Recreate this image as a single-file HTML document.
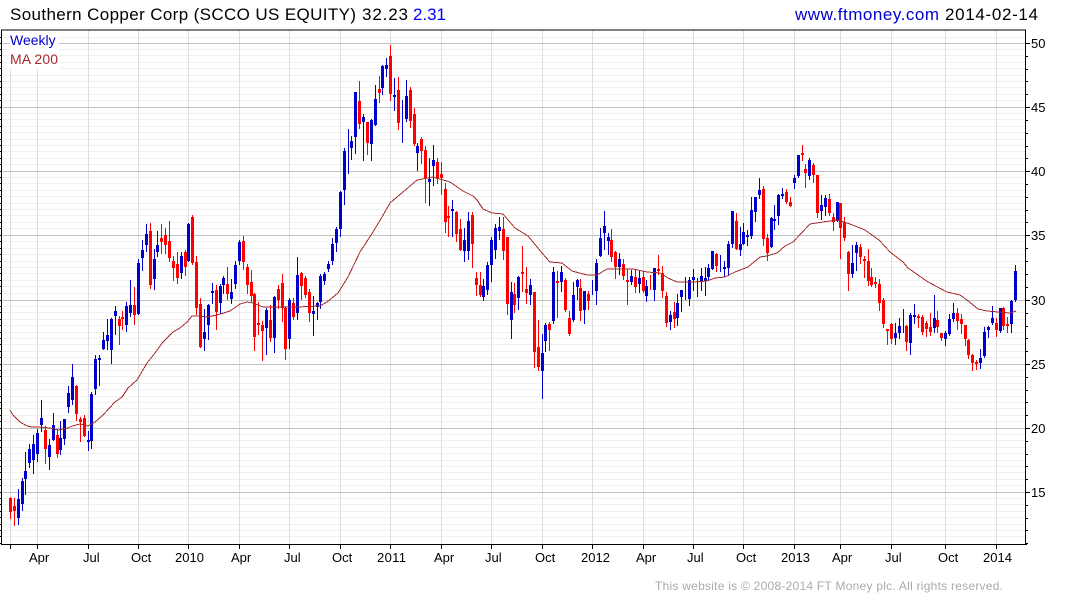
<!DOCTYPE html>
<html><head><meta charset="utf-8"><title>SCCO</title>
<style>html,body{margin:0;padding:0;background:#fff;width:1075px;height:600px;overflow:hidden}svg{display:block;font-family:"Liberation Sans",Arial,sans-serif}</style></head>
<body>
<svg width="1075" height="600" viewBox="0 0 1075 600" xmlns="http://www.w3.org/2000/svg">
<g shape-rendering="crispEdges" fill="none">
<path stroke="#f0f0f0" d="M2 37.5H1026M2 49.5H1026M2 55.5H1026M2 62.5H1026M2 68.5H1026M2 75.5H1026M2 81.5H1026M2 87.5H1026M2 94.5H1026M2 100.5H1026M2 113.5H1026M2 119.5H1026M2 126.5H1026M2 132.5H1026M2 139.5H1026M2 145.5H1026M2 151.5H1026M2 158.5H1026M2 164.5H1026M2 177.5H1026M2 183.5H1026M2 190.5H1026M2 196.5H1026M2 203.5H1026M2 209.5H1026M2 215.5H1026M2 222.5H1026M2 228.5H1026M2 241.5H1026M2 248.5H1026M2 254.5H1026M2 261.5H1026M2 267.5H1026M2 273.5H1026M2 280.5H1026M2 286.5H1026M2 293.5H1026M2 306.5H1026M2 312.5H1026M2 319.5H1026M2 325.5H1026M2 332.5H1026M2 338.5H1026M2 344.5H1026M2 351.5H1026M2 357.5H1026M2 370.5H1026M2 376.5H1026M2 383.5H1026M2 389.5H1026M2 396.5H1026M2 402.5H1026M2 408.5H1026M2 415.5H1026M2 421.5H1026M2 434.5H1026M2 440.5H1026M2 447.5H1026M2 453.5H1026M2 460.5H1026M2 466.5H1026M2 472.5H1026M2 479.5H1026M2 485.5H1026M2 498.5H1026M2 504.5H1026M2 511.5H1026M2 517.5H1026M2 524.5H1026M2 530.5H1026M2 536.5H1026"/>
<path stroke="#dedede" d="M10.5 30V544M37.5 30V544M88.5 30V544M138.5 30V544M188.5 30V544M239.5 30V544M289.5 30V544M340.5 30V544M390.5 30V544M441.5 30V544M491.5 30V544M542.5 30V544M592.5 30V544M643.5 30V544M693.5 30V544M743.5 30V544M794.5 30V544M840.5 30V544M891.5 30V544M945.5 30V544M996.5 30V544"/>
<path stroke="#c0c0c0" d="M2 43.5H1026M2 107.5H1026M2 171.5H1026M2 235.5H1026M2 300.5H1026M2 364.5H1026M2 428.5H1026M2 492.5H1026"/>
<rect x="10" y="31" width="49" height="38" fill="#fff"/>
<!-- blue candles -->
<path stroke="#0000cc" d="M18.5 489V525M17.5 499V518m2 0V499M22.5 478V511M21.5 481V504m2 0V481M25.5 452V495M24.5 471V479m2 0V471M29.5 444V468M28.5 449V463m2 0V449M33.5 435V474M32.5 444V460m2 0V444M37.5 429V462M36.5 433V454m2 0V433M41.5 400V432M40.5 418V425m2 0V418M49.5 439V470M48.5 445V457m2 0V445M53.5 413V441M52.5 425V440m2 0V425M60.5 421V455M59.5 438V450m2 0V438M64.5 419V445M63.5 419V439m2 0V419M68.5 386V413M67.5 393V407m2 0V393M72.5 364V405M71.5 377V400m2 0V377M88.5 431V451M87.5 440V442m2 0V440M91.5 392V449M90.5 394V441m2 0V394M95.5 355V395M94.5 359V389m2 0V359M99.5 355V386M98.5 358V360m2 0V358M103.5 332V350M102.5 340V349m2 0V340M107.5 319V350M106.5 335V341m2 0V335M111.5 318V364M110.5 319V350m2 0V319M115.5 306V335M114.5 311V316m2 0V311M126.5 302V332M125.5 306V325m2 0V306M130.5 280V317M129.5 305V313m2 0V305M138.5 259V315M137.5 263V314m2 0V263M142.5 240V271M141.5 250V258m2 0V250M146.5 224V252M145.5 234V245m2 0V234M154.5 249V290M153.5 259V279m2 0V259M157.5 231V257M156.5 245V252m2 0V245M181.5 252V279M180.5 256V273m2 0V256M188.5 223V262M187.5 224V261m2 0V224M204.5 309V351M203.5 332V339m2 0V332M208.5 304V340M207.5 305V325m2 0V305M212.5 283V304M211.5 291V293m2 0V291M220.5 284V314M219.5 286V303m2 0V286M223.5 276V294M222.5 278V285m2 0V278M231.5 279V304M230.5 292V299m2 0V292M235.5 261V289M234.5 265V284m2 0V265M239.5 240V265M238.5 242V261m2 0V242M266.5 308V355M265.5 310V328m2 0V310M274.5 296V353M273.5 297V338m2 0V297M289.5 298V349M288.5 300V339m2 0V300M297.5 257V320M296.5 275V313m2 0V275M313.5 296V336M312.5 311V314m2 0V311M317.5 302V320M316.5 303V307m2 0V303M320.5 274V309M319.5 276V302m2 0V276M324.5 272V285M323.5 274V281m2 0V274M328.5 261V272M327.5 264V269m2 0V264M332.5 238V265M331.5 244V261m2 0V244M336.5 227V252M335.5 229V243m2 0V229M340.5 191V237M339.5 192V229m2 0V192M344.5 148V205M343.5 151V190m2 0V151M348.5 129V174M351.5 136V160M350.5 141V148m2 0V141M355.5 92V154M354.5 92V137m2 0V92M363.5 114V161M362.5 117V122m2 0V117M371.5 119V161M370.5 120V144m2 0V120M375.5 85V126M374.5 99V125m2 0V99M382.5 65V95M381.5 66V88m2 0V66M386.5 58V77M385.5 65V69m2 0V65M394.5 78V111M393.5 95V97m2 0V95M402.5 100V143M406.5 80V122M405.5 96V119m2 0V96M417.5 143V171M416.5 146V153m2 0V146M429.5 158V206M428.5 179V182m2 0V179M433.5 145V186M432.5 160V166m2 0V160M452.5 200V237M451.5 209V211m2 0V209M464.5 228V262M463.5 240V251m2 0V240M468.5 212V260M467.5 221V251m2 0V221M483.5 279V301M482.5 286V297m2 0V286M487.5 262V295M486.5 265V290m2 0V265M491.5 237V282M490.5 240V265m2 0V240M495.5 224V259M494.5 228V250m2 0V228M499.5 217V240M498.5 227V231m2 0V227M511.5 282V339M510.5 292V320m2 0V292M518.5 276V310M517.5 277V298m2 0V277M530.5 279V305M529.5 285V295m2 0V285M542.5 334V399M541.5 353V371m2 0V353M545.5 323V352M544.5 325V341m2 0V325M553.5 267V324M552.5 272V321m2 0V272M561.5 266V292M560.5 272V282m2 0V272M573.5 282V322M572.5 295V320m2 0V295M577.5 279V300M576.5 280V287m2 0V280M584.5 291V324M583.5 291V310m2 0V291M592.5 280V295M596.5 259V305M595.5 263V291m2 0V263M600.5 228V257M599.5 238V256m2 0V238M604.5 211V250M603.5 226V233m2 0V226M608.5 233V255M607.5 237V241m2 0V237M619.5 253V275M618.5 259V267m2 0V259M631.5 270V285M630.5 276V282m2 0V276M639.5 270V293M638.5 278V284m2 0V278M646.5 280V302M645.5 286V296m2 0V286M654.5 268V301M653.5 268V290m2 0V268M670.5 311V330M669.5 315V322m2 0V315M677.5 294V326M676.5 303V318m2 0V303M681.5 290V312M680.5 290V297m2 0V290M685.5 277V300M689.5 277V306M688.5 280V299m2 0V280M693.5 269V291M692.5 277V280m2 0V277M697.5 278V297M701.5 268V291M700.5 276V281m2 0V276M705.5 267V296M704.5 278V281m2 0V278M708.5 264V280M707.5 268V277m2 0V268M712.5 251V270M711.5 251V269m2 0V251M720.5 255V272M724.5 261V277M723.5 267V269m2 0V267M728.5 241V276M727.5 244V268m2 0V244M732.5 211V248M731.5 211V244m2 0V211M740.5 227V256M739.5 244V250m2 0V244M743.5 223V245M742.5 232V244m2 0V232M747.5 230V246M746.5 235V237m2 0V235M751.5 197V239M750.5 210V236m2 0V210M755.5 197V222M754.5 197V212m2 0V197M759.5 178V199M758.5 190V195m2 0V190M771.5 217V248M770.5 218V247m2 0V218M774.5 205V230M773.5 219V221m2 0V219M778.5 194V225M777.5 195V216m2 0V195M782.5 188V199M781.5 194V196m2 0V194M794.5 175V189M793.5 178V183m2 0V178M798.5 155V178M797.5 155V176m2 0V155M809.5 158V180M808.5 160V176m2 0V160M821.5 195V220M820.5 205V211m2 0V205M825.5 195V216M824.5 198V207m2 0V198M837.5 202V222M836.5 202V221m2 0V202M852.5 245V278M851.5 263V274m2 0V263M856.5 242V271M855.5 245V253m2 0V245M895.5 323V345M894.5 333V338m2 0V333M899.5 318V339M898.5 326V333m2 0V326M903.5 309V333M910.5 313V355M909.5 315V343m2 0V315M914.5 304V324M913.5 315V317m2 0V315M934.5 295V333M933.5 318V328m2 0V318M945.5 331V346M944.5 333V339m2 0V333M949.5 314V336M948.5 319V334m2 0V319M953.5 303V322M952.5 313V319m2 0V313M980.5 349V369M979.5 358V363m2 0V358M984.5 327V358M983.5 332V356m2 0V332M988.5 326V338M987.5 327V330m2 0V327M992.5 306V325M991.5 318V323m2 0V318M1000.5 308V333M999.5 308V331m2 0V308M1011.5 300V333M1010.5 301V324m2 0V301M1015.5 265V302M1014.5 271V300m2 0V271"/>
<!-- red candles -->
<path stroke="#ff0000" d="M10.5 497V519M9.5 498V512m2 0V498M14.5 498V526M13.5 506V511m2 0V506M45.5 426V464M44.5 430V449m2 0V430M57.5 429V458M56.5 435V454m2 0V435M76.5 385V421M75.5 386V414m2 0V386M80.5 417V442M79.5 419V422m2 0V419M84.5 415V437M83.5 418V436m2 0V418M119.5 316V345M118.5 319V326m2 0V319M122.5 311V330M121.5 317V319m2 0V317M134.5 287V325M133.5 305V315m2 0V305M150.5 223V289M149.5 231V285m2 0V231M161.5 224V254M160.5 238V242m2 0V238M165.5 228V254M164.5 235V245m2 0V235M169.5 221V262M168.5 241V258m2 0V241M173.5 256V281M172.5 261V268m2 0V261M177.5 252V284M176.5 264V278m2 0V264M185.5 250V276M184.5 252V267m2 0V252M192.5 215V265M191.5 217V263m2 0V217M196.5 256V315M195.5 262V308m2 0V262M200.5 298V348M199.5 304V347m2 0V304M216.5 285V330M215.5 290V312m2 0V290M227.5 267V300M226.5 284V294m2 0V284M243.5 236V270M242.5 241V262m2 0V241M247.5 264V294M246.5 267V285m2 0V267M251.5 270V302M250.5 282V296m2 0V282M254.5 293V351M253.5 294V337m2 0V294M258.5 302V335M257.5 323V325m2 0V323M262.5 321V361M261.5 325V331m2 0V325M270.5 305V342M269.5 320V338m2 0V320M278.5 285V309M277.5 289V300m2 0V289M282.5 274V322M281.5 283V308m2 0V283M285.5 306V360M284.5 308V349m2 0V308M293.5 298V320M292.5 303V317m2 0V303M301.5 272V300M300.5 273V286m2 0V273M305.5 276V298M304.5 278V295m2 0V278M309.5 289V322M308.5 292V313m2 0V292M359.5 81V129M358.5 101V124m2 0V101M367.5 122V155M366.5 122V143m2 0V122M379.5 76V103M378.5 89V93m2 0V89M390.5 45V101M389.5 56V94m2 0V56M398.5 77V130M397.5 90V123m2 0V90M410.5 87V128M409.5 90V121m2 0V90M414.5 108V146M413.5 114V144m2 0V114M421.5 137V164M420.5 139V151m2 0V139M425.5 146V203M424.5 150V178m2 0V150M437.5 158V184M436.5 162V179m2 0V162M441.5 162V195M440.5 174V178m2 0V174M445.5 183V233M444.5 189V222m2 0V189M448.5 206V237M447.5 216V218m2 0V216M456.5 211V242M455.5 212V234m2 0V212M460.5 219V251M459.5 229V250m2 0V229M472.5 212V268M471.5 215V244m2 0V215M476.5 272V296M475.5 278V285m2 0V278M480.5 272V297M479.5 285V295m2 0V285M503.5 217V260M502.5 229V251m2 0V229M507.5 237V315M506.5 237V304m2 0V237M514.5 283V313M513.5 294V305m2 0V294M522.5 246V292M521.5 272V274m2 0V272M526.5 267V304M525.5 289V293m2 0V289M534.5 292V368M533.5 292V352m2 0V292M538.5 320V371M537.5 347V367m2 0V347M549.5 322V351M548.5 324V330m2 0V324M557.5 271V318M556.5 281V283m2 0V281M565.5 278V312M564.5 280V310m2 0V280M569.5 311V336M568.5 318V334m2 0V318M580.5 279V321M579.5 288V311m2 0V288M588.5 291V310M587.5 294V301m2 0V294M611.5 229V262M610.5 240V257m2 0V240M615.5 251V279M614.5 252V267m2 0V252M623.5 259V280M622.5 264V276m2 0V264M627.5 269V305M626.5 280V282m2 0V280M635.5 269V293M634.5 277V287m2 0V277M643.5 271V293M642.5 277V291m2 0V277M650.5 275V290M658.5 255V275M657.5 269V271m2 0V269M662.5 266V298M661.5 273V291m2 0V273M666.5 292V327M665.5 296V323m2 0V296M674.5 302V328M673.5 312V319m2 0V312M716.5 253V272M715.5 254V266m2 0V254M736.5 213V250M735.5 221V249m2 0V221M763.5 186V246M762.5 189V239m2 0V189M767.5 234V261M766.5 238V253m2 0V238M786.5 189V204M785.5 192V202m2 0V192M790.5 197V207M789.5 202V206m2 0V202M802.5 145V161M801.5 153V155m2 0V153M805.5 164V188M804.5 169V173m2 0V169M813.5 163V183M812.5 165V175m2 0V165M817.5 175V218M816.5 175V213m2 0V175M829.5 194V216M828.5 199V213m2 0V199M833.5 213V231M832.5 217V222m2 0V217M840.5 203V259M839.5 203V228m2 0V203M844.5 217V241M843.5 222V238m2 0V222M848.5 251V291M847.5 252V274m2 0V252M860.5 244V264M859.5 247V257m2 0V247M864.5 256V278M863.5 259V261m2 0V259M868.5 249V286M867.5 261V281m2 0V261M871.5 268V287M870.5 277V285m2 0V277M875.5 277V288M874.5 282V284m2 0V282M879.5 279V311M878.5 284V303m2 0V284M883.5 298V328M882.5 300V324m2 0V300M887.5 329V345M886.5 329V331m2 0V329M891.5 323V344M890.5 324V339m2 0V324M906.5 325V351M905.5 326V342m2 0V326M918.5 314V328M917.5 316V318m2 0V316M922.5 315V335M921.5 317V332m2 0V317M926.5 321V337M925.5 323V329m2 0V323M930.5 313V336M929.5 327V332m2 0V327M937.5 311V333M936.5 320V327m2 0V320M941.5 333V341M940.5 333V338m2 0V333M957.5 308V330M956.5 313V321m2 0V313M961.5 314V334M960.5 319V324m2 0V319M965.5 325V346M964.5 325V339m2 0V325M968.5 339V359M967.5 340V355m2 0V340M972.5 354V371M971.5 355V363m2 0V355M976.5 360V370M975.5 362V364m2 0V362M996.5 318V337M995.5 323V330m2 0V323M1003.5 307V330M1002.5 308V326m2 0V308M1007.5 317V333M1006.5 324V326m2 0V324"/>
<!-- axes -->
<path stroke="#000" d="M1 30H1026M1.5 30V544M1 544.5H1027M1025.5 30V545"/>
<path stroke="#000" d="M10.5 545V549M37.5 545V549M88.5 545V549M138.5 545V549M188.5 545V549M239.5 545V549M289.5 545V549M340.5 545V549M390.5 545V549M441.5 545V549M491.5 545V549M542.5 545V549M592.5 545V549M643.5 545V549M693.5 545V549M743.5 545V549M794.5 545V549M840.5 545V549M891.5 545V549M945.5 545V549M996.5 545V549"/>
<path stroke="#000" d="M1026 43.5h4M1026 107.5h4M1026 171.5h4M1026 235.5h4M1026 300.5h4M1026 364.5h4M1026 428.5h4M1026 492.5h4M1026 56.5h2M1026 69.5h2M1026 81.5h2M1026 94.5h2M1026 120.5h2M1026 133.5h2M1026 146.5h2M1026 158.5h2M1026 184.5h2M1026 197.5h2M1026 210.5h2M1026 222.5h2M1026 248.5h2M1026 261.5h2M1026 274.5h2M1026 287.5h2M1026 313.5h2M1026 326.5h2M1026 338.5h2M1026 351.5h2M1026 377.5h2M1026 390.5h2M1026 402.5h2M1026 415.5h2M1026 441.5h2M1026 454.5h2M1026 466.5h2M1026 479.5h2M1026 505.5h2M1026 518.5h2M1026 530.5h2M1026 543.5h2"/>
<path stroke="#000" d="M0 37.5h1M0 43.5h1M0 49.5h1M0 55.5h1M0 62.5h1M0 68.5h1M0 75.5h1M0 81.5h1M0 87.5h1M0 94.5h1M0 100.5h1M0 107.5h1M0 113.5h1M0 119.5h1M0 126.5h1M0 132.5h1M0 139.5h1M0 145.5h1M0 151.5h1M0 158.5h1M0 164.5h1M0 171.5h1M0 177.5h1M0 183.5h1M0 190.5h1M0 196.5h1M0 203.5h1M0 209.5h1M0 215.5h1M0 222.5h1M0 228.5h1M0 235.5h1M0 241.5h1M0 248.5h1M0 254.5h1M0 261.5h1M0 267.5h1M0 273.5h1M0 280.5h1M0 286.5h1M0 293.5h1M0 300.5h1M0 306.5h1M0 312.5h1M0 319.5h1M0 325.5h1M0 332.5h1M0 338.5h1M0 344.5h1M0 351.5h1M0 357.5h1M0 364.5h1M0 370.5h1M0 376.5h1M0 383.5h1M0 389.5h1M0 396.5h1M0 402.5h1M0 408.5h1M0 415.5h1M0 421.5h1M0 428.5h1M0 434.5h1M0 440.5h1M0 447.5h1M0 453.5h1M0 460.5h1M0 466.5h1M0 472.5h1M0 479.5h1M0 485.5h1M0 492.5h1M0 498.5h1M0 504.5h1M0 511.5h1M0 517.5h1M0 524.5h1M0 530.5h1M0 536.5h1M0 543.5h1"/>
</g>
<!-- MA 200 -->
<polyline fill="none" stroke="#a52a2a" stroke-width="1" shape-rendering="crispEdges" points="10,410 13,415 20,422 27,426 32,427 40,427 50,428 58,430 68,428 72,426 80,424 88,426 95,422 103,415 115,402 122,397 128,388 137,380 147,363 155,353 163,342 173,332 180,328 187,322 192,316 197,316 207,317 217,315 230,311 240,304 247,302 253,303 263,307 280,307 297,307 320,306 327,302 338,293 348,277 360,252 373,232 382,217 390,203 403,192 417,180 433,177 450,182 463,191 473,196 477,200 483,209 492,213 503,214 515,228 528,236 542,253 550,262 562,263 572,271 587,275 597,275 607,269 617,269 633,269 647,272 660,273 668,278 677,282 693,282 707,281 715,278 725,277 735,272 748,267 760,257 767,256 777,253 785,246 793,242 810,224 823,222 837,220 850,224 865,230 879,240 890,252 903,262 908,268 928,282 947,292 960,295 967,300 978,309 987,311 998,312 1010,313 1016,311"/>
<!-- text -->
<text x="10" y="20" font-size="17" fill="#000" textLength="346" lengthAdjust="spacing">Southern Copper Corp (SCCO US EQUITY)</text>
<text x="362" y="20" font-size="17" fill="#000" textLength="46" lengthAdjust="spacing">32.23</text>
<text x="413" y="20" font-size="17" fill="#0000ff" textLength="33" lengthAdjust="spacing">2.31</text>
<text x="795" y="20" font-size="17" fill="#0000cc" textLength="144" lengthAdjust="spacing">www.ftmoney.com</text>
<text x="945" y="20" font-size="17" fill="#000" textLength="93" lengthAdjust="spacing">2014-02-14</text>
<text x="10" y="45" font-size="14" fill="#0000cc">Weekly</text>
<text x="10" y="64" font-size="14" fill="#a52a2a" textLength="48" lengthAdjust="spacing">MA 200</text>
<g font-size="13" fill="#000">
<text x="1031" y="48">50</text><text x="1031" y="112">45</text><text x="1031" y="176">40</text><text x="1031" y="240">35</text><text x="1031" y="305">30</text><text x="1031" y="369">25</text><text x="1031" y="433">20</text><text x="1031" y="497">15</text>
<text x="29" y="562">Apr</text><text x="83" y="562">Jul</text><text x="131" y="562">Oct</text><text x="175" y="562" textLength="29">2010</text><text x="231" y="562">Apr</text><text x="284" y="562">Jul</text><text x="332" y="562">Oct</text><text x="377" y="562" textLength="29">2011</text><text x="434" y="562">Apr</text><text x="485" y="562">Jul</text><text x="535" y="562">Oct</text><text x="581" y="562" textLength="29">2012</text><text x="636" y="562">Apr</text><text x="687" y="562">Jul</text><text x="736" y="562">Oct</text><text x="781" y="562" textLength="29">2013</text><text x="832" y="562">Apr</text><text x="885" y="562">Jul</text><text x="938" y="562">Oct</text><text x="983" y="562" textLength="29">2014</text>
</g>
<text x="655" y="590" font-size="12" fill="#aaaaaa" textLength="348" lengthAdjust="spacing">This website is © 2008-2014 FT Money plc. All rights reserved.</text>
</svg>
</body></html>
